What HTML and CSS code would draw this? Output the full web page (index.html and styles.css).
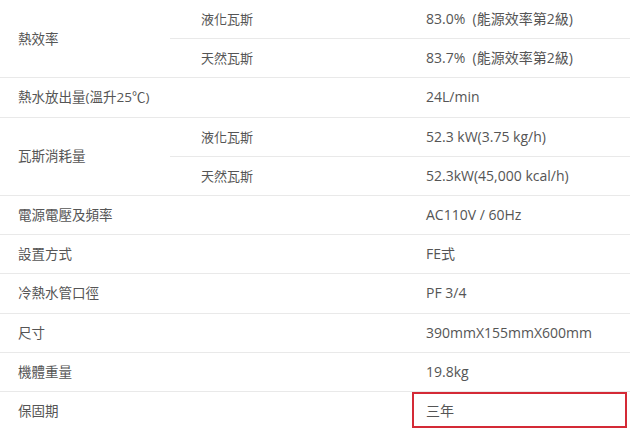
FILE: index.html
```html
<!DOCTYPE html>
<html lang="zh-Hant">
<head>
<meta charset="utf-8">
<title>規格</title>
<link rel="stylesheet" href="styles.css">
</head>
<body>
<table class="spec">
  <colgroup>
    <col class="c1">
    <col class="c2">
    <col class="c3">
  </colgroup>
  <tbody>
    <tr><td class="label" rowspan="2">熱效率</td><td class="sub">液化瓦斯</td><td class="val">83.0%&nbsp; (能源效率第2級)</td></tr>
    <tr><td class="sub">天然瓦斯</td><td class="val">83.7%&nbsp; (能源效率第2級)</td></tr>
    <tr><td class="label" colspan="2">熱水放出量(溫升25℃)</td><td class="val">24L/min</td></tr>
    <tr><td class="label" rowspan="2">瓦斯消耗量</td><td class="sub">液化瓦斯</td><td class="val">52.3 kW(3.75 kg/h)</td></tr>
    <tr><td class="sub">天然瓦斯</td><td class="val">52.3kW(45,000 kcal/h)</td></tr>
    <tr><td class="label" colspan="2">電源電壓及頻率</td><td class="val">AC110V / 60Hz</td></tr>
    <tr><td class="label" colspan="2">設置方式</td><td class="val">FE式</td></tr>
    <tr><td class="label" colspan="2">冷熱水管口徑</td><td class="val">PF 3/4</td></tr>
    <tr><td class="label" colspan="2">尺寸</td><td class="val">390mmX155mmX600mm</td></tr>
    <tr><td class="label" colspan="2">機體重量</td><td class="val">19.8kg</td></tr>
    <tr><td class="label" colspan="2">保固期</td><td class="val highlight">三年</td></tr>
  </tbody>
</table>
</body>
</html>
```
FILE: styles.css
```css
html, body {
  margin: 0;
  padding: 0;
  background: #ffffff;
}
body {
  font-family: "Open Sans", "Noto Sans CJK TC", sans-serif;
  font-size: 13.5px;
  color: #555555;
}
.spec {
  width: 630px;
  border-collapse: collapse;
  table-layout: fixed;
}
.c1 { width: 170px; }
.c2 { width: 242px; }
.c3 { width: 218px; }
.spec td {
  padding: 10px 0;
  line-height: 18.2px;
  border-bottom: 1px solid #e9e9e9;
  vertical-align: middle;
  white-space: nowrap;
}
.spec tr:last-child td {
  border-bottom: none;
}
.label {
  padding-left: 18px !important;
}
.sub {
  padding-left: 31px !important;
  font-size: 13px;
}
.val {
  padding-left: 14px !important;
  font-size: 14px;
}
.highlight {
  position: relative;
}
.highlight::after {
  content: "";
  position: absolute;
  left: 0;
  top: 0;
  right: 3px;
  bottom: 2px;
  border: 2.5px solid #d42a36;
}
```
